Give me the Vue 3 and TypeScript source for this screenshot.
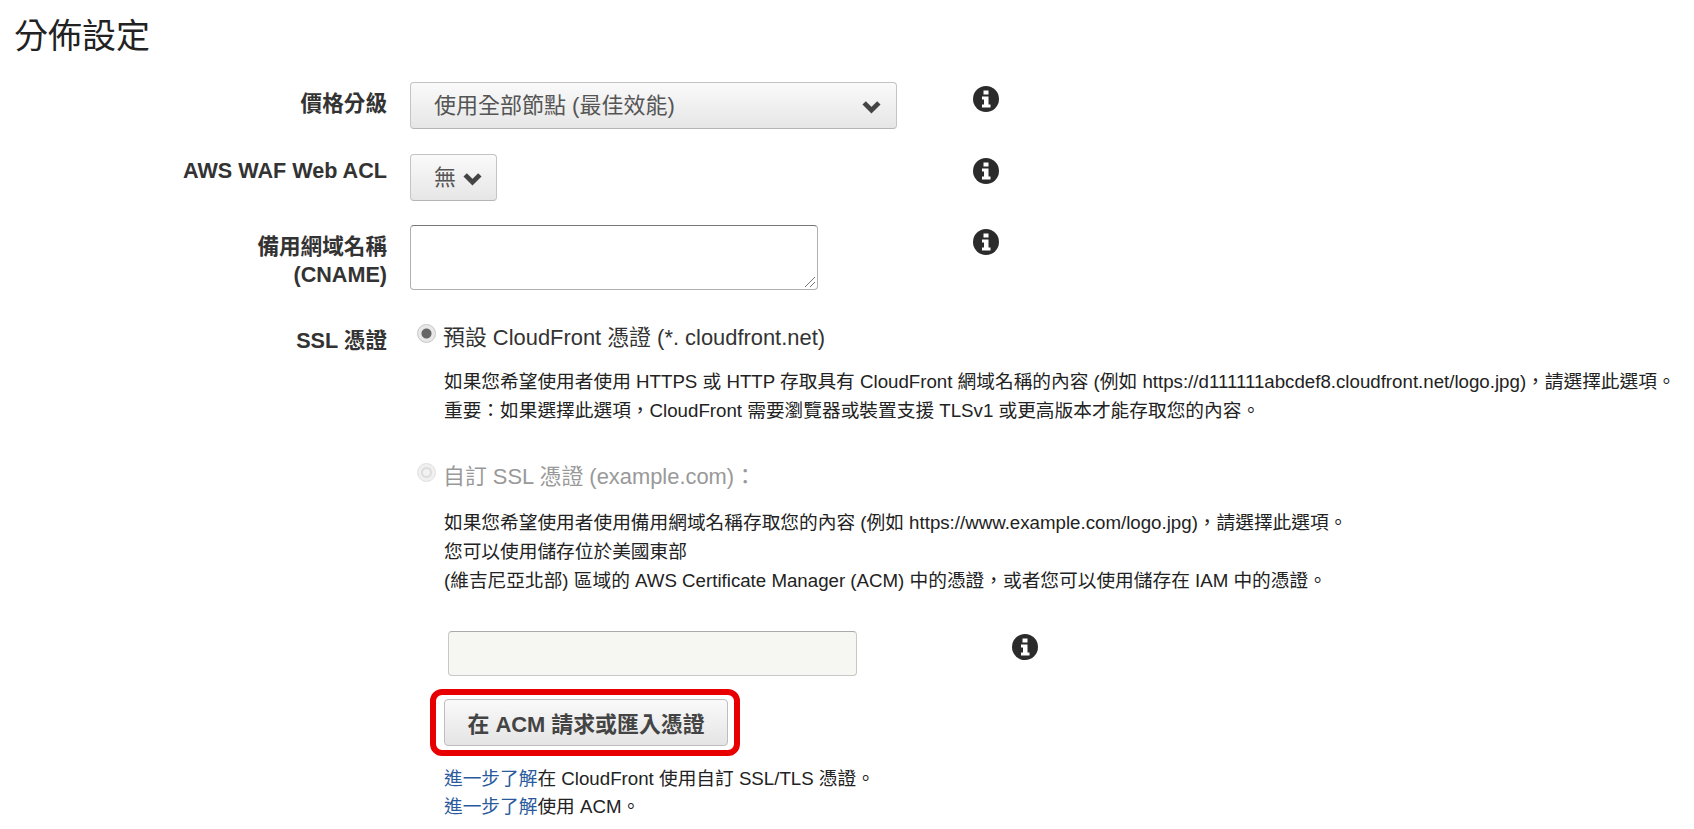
<script setup lang="ts">
const fieldRows = [
  { id: 'price', label: ['價格分級'] },
  { id: 'waf', label: ['AWS WAF Web ACL'] },
  { id: 'cname', label: ['備用網域名稱', '(CNAME)'] },
]
</script>

<template>
  <main class="page">
    <h1 class="title">分佈設定</h1>

    <div v-for="row in fieldRows" :key="row.id" class="row" :class="'row-' + row.id">
      <div class="label">
        <div v-for="line in row.label" :key="line">{{ line }}</div>
      </div>
      <div class="control">
        <button v-if="row.id === 'price'" class="select select-wide" type="button">
          <span class="select-text">使用全部節點 (最佳效能)</span>
          <svg class="chevron" viewBox="0 0 20 14"><path d="M3 3.5 10 10.5 17 3.5" /></svg>
        </button>
        <button v-else-if="row.id === 'waf'" class="select select-small" type="button">
          <span class="select-text">無</span>
          <svg class="chevron" viewBox="0 0 20 14"><path d="M3 3.5 10 10.5 17 3.5" /></svg>
        </button>
        <div v-else class="textarea">
          <svg class="grip" viewBox="0 0 14 14"><path d="M13 3 3 13M13 8 8 13" /></svg>
        </div>
      </div>
      <svg class="info" viewBox="0 0 26 26">
        <circle cx="13" cy="13" r="13" />
        <path class="info-i" d="M10.5 4.5h5v4h-5zM9 10.5h6.5v8H17.5v3h-8.5v-3h2v-5H9z" />
      </svg>
    </div>

    <section class="ssl">
      <div class="label ssl-label">SSL 憑證</div>
      <div class="ssl-body">
        <label class="radio-line">
          <span class="radio radio-on"></span>
          <span>預設 CloudFront 憑證 (*. cloudfront.net)</span>
        </label>
        <p class="para para-first">如果您希望使用者使用 HTTPS 或 HTTP 存取具有 CloudFront 網域名稱的內容 (例如 https://d111111abcdef8.cloudfront.net/logo.jpg)，請選擇此選項。</p>
        <p class="para">重要：如果選擇此選項，CloudFront 需要瀏覽器或裝置支援 TLSv1 或更高版本才能存取您的內容。</p>

        <label class="radio-line radio-line-off">
          <span class="radio radio-off"></span>
          <span>自訂 SSL 憑證 (example.com)：</span>
        </label>
        <p class="para para-second">如果您希望使用者使用備用網域名稱存取您的內容 (例如 https://www.example.com/logo.jpg)，請選擇此選項。</p>
        <p class="para">您可以使用儲存位於美國東部</p>
        <p class="para">(維吉尼亞北部) 區域的 AWS Certificate Manager (ACM) 中的憑證，或者您可以使用儲存在 IAM 中的憑證。</p>

        <div class="cert-row">
          <div class="cert-input"></div>
          <svg class="info" viewBox="0 0 26 26">
            <circle cx="13" cy="13" r="13" />
            <path class="info-i" d="M10.5 4.5h5v4h-5zM9 10.5h6.5v8H17.5v3h-8.5v-3h2v-5H9z" />
          </svg>
        </div>

        <div class="acm-wrap">
          <button class="acm" type="button">在 ACM 請求或匯入憑證</button>
          <span class="highlight"></span>
        </div>

        <p class="para para-links"><a class="link">進一步了解</a>在 CloudFront 使用自訂 SSL/TLS 憑證。</p>
        <p class="para para-last"><a class="link">進一步了解</a>使用 ACM。</p>
      </div>
    </section>
  </main>
</template>

<style scoped>
.page {
  width: 1694px;
  height: 829px;
  overflow: hidden;
  box-sizing: border-box;
  padding-top: 16px;
  background: #fff;
  color: #1f1f1f;
  font-family: "Liberation Sans", "Noto Sans CJK TC", sans-serif;
}
.title {
  margin: 0 0 0 14px;
  font-size: 34px;
  line-height: 40px;
  font-weight: 400;
  color: #222;
}
.row {
  display: grid;
  grid-template-columns: 387px 586px 26px;
  align-items: start;
}
.row-price { margin-top: 26px; height: 72px; }
.row-waf { height: 71px; }
.row-cname { height: 80px; }
.label {
  text-align: right;
  font-size: 21.6px;
  font-weight: 700;
  line-height: 28px;
  color: #333;
}
.row-price .label { padding-top: 8px; }
.row-waf .label { padding-top: 3px; }
.row-cname .label { padding-top: 8px; }
.control { padding-left: 23px; }
.select {
  display: flex;
  align-items: center;
  justify-content: space-between;
  box-sizing: border-box;
  height: 47px;
  padding: 0 14px 0 23px;
  border: 1px solid #c4c4c4;
  border-bottom-color: #b5b5b5;
  border-radius: 4px;
  background: linear-gradient(#fafafa, #e6e6e6);
  font: inherit;
  font-size: 22px;
  color: #555;
}
.select-text { position: relative; top: -3px; }
.select-wide { width: 487px; }
.select-small { width: 87px; padding: 0 13px 0 23px; }
.chevron { width: 21px; height: 15px; margin-top: 1px; fill: none; }
.chevron path { stroke: #444; stroke-width: 4.5; }
.textarea {
  position: relative;
  box-sizing: border-box;
  width: 408px;
  height: 65px;
  border: 1px solid #b0b0b0;
  border-top-color: #777;
  border-radius: 4px;
  background: #fff;
}
.grip {
  position: absolute;
  right: 1px;
  bottom: 1px;
  width: 14px;
  height: 14px;
  fill: none;
}
.grip path { stroke: #777; stroke-width: 1; }
.info { width: 26px; height: 26px; }
.info circle { fill: #2b2b2b; }
.info-i { fill: #fff; }
.row-price .info { margin-top: 4px; }
.row-waf .info { margin-top: 4px; }
.row-cname .info { margin-top: 4px; }
.ssl { display: flex; }
.ssl-label { width: 387px; flex: none; padding-top: 22px; }
.ssl-body { padding-left: 29px; padding-top: 16px; width: 1278px; flex: none; }
.radio-line {
  display: flex;
  align-items: center;
  height: 28px;
  font-size: 21.9px;
  color: #333;
}
.radio-line-off { margin-top: 35px; color: #999; }
.radio {
  flex: none;
  box-sizing: border-box;
  width: 19px;
  height: 19px;
  margin: -3px 7px 0 1px;
  border-radius: 50%;
  border: 1px solid #c6c6c6;
  background: #eee;
}
.radio-on { background: radial-gradient(circle, #666 0 4.5px, #e8e8e8 5.5px); }
.radio-off { background: radial-gradient(circle, #f2f2f2 0 3px, #dcdcdc 4px 5px, #f0f0f0 6px); border-color: #e0e0e0; }
.para {
  margin: 0 0 0 28px;
  font-size: 18.7px;
  line-height: 29px;
  color: #222;
  white-space: nowrap;
}
.para-first { margin-top: 18px; }
.para-second { margin-top: 20px; }
.cert-row {
  display: grid;
  grid-template-columns: 564px 26px;
  margin: 36px 0 0 32px;
  height: 45px;
}
.cert-input {
  box-sizing: border-box;
  width: 409px;
  height: 45px;
  border: 1px solid #c8c8c8;
  border-top-color: #aaa;
  border-radius: 4px;
  background: #f6f6f3;
}
.cert-row .info { margin-top: 3px; }
.acm-wrap {
  position: relative;
  width: 284px;
  height: 47px;
  margin: 23px 0 0 28px;
}
.acm {
  display: block;
  box-sizing: border-box;
  width: 100%;
  height: 100%;
  padding: 0;
  border: 1px solid #bdbdbd;
  border-radius: 4px;
  background: linear-gradient(#fafafa, #e4e4e4);
  font: inherit;
  font-size: 21.9px;
  font-weight: 700;
  color: #444;
}
.highlight {
  position: absolute;
  left: -14px;
  top: -10px;
  width: 310px;
  height: 67px;
  box-sizing: border-box;
  border: 6px solid #e80000;
  border-radius: 12px;
}
.para-links { margin-top: 18px; }
.para-last { margin-top: -1px; }
.link { color: #2a5a9c; }
</style>
